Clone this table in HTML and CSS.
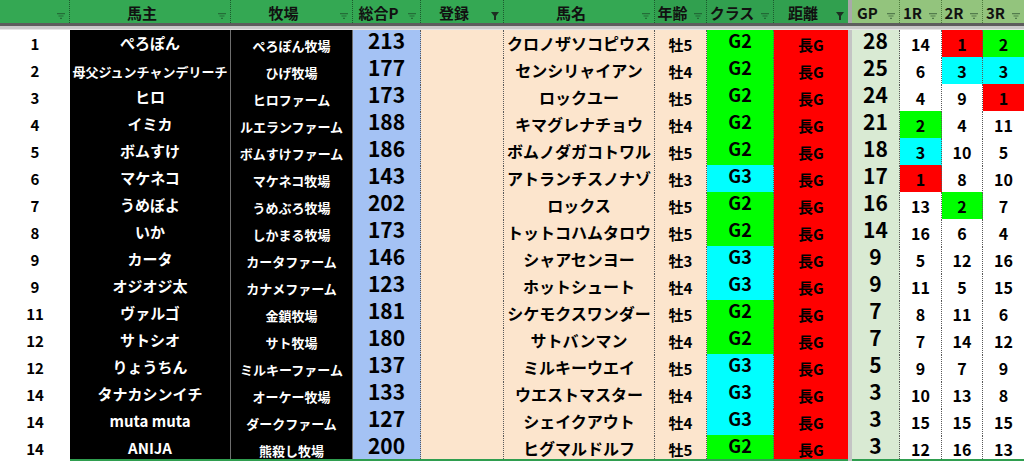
FILE: index.html
```html
<!DOCTYPE html>
<html lang="ja">
<head>
<meta charset="utf-8">
<title>馬主ランキング</title>
<link rel="stylesheet" href="styles.css">
</head>
<body>
<div class="sheet">
  <div class="row head">
    <div class="h"><span class="t"></span><svg class="fi" viewBox="0 0 8 6"><path d="M0 0h8v1.2H0zM1.5 2.4h5v1.2h-5zM3 4.8h2V6H3z"/></svg></div>
    <div class="h"><span class="t">馬主</span><svg class="fi" viewBox="0 0 8 6"><path d="M0 0h8v1.2H0zM1.5 2.4h5v1.2h-5zM3 4.8h2V6H3z"/></svg></div>
    <div class="h"><span class="t">牧場</span><svg class="fi" viewBox="0 0 8 6"><path d="M0 0h8v1.2H0zM1.5 2.4h5v1.2h-5zM3 4.8h2V6H3z"/></svg></div>
    <div class="h"><span class="t">総合P</span><svg class="fi" viewBox="0 0 8 6"><path d="M0 0h8v1.2H0zM1.5 2.4h5v1.2h-5zM3 4.8h2V6H3z"/></svg></div>
    <div class="h"><span class="t">登録</span><svg class="fa" viewBox="0 0 8 8"><path d="M0 0h8L5 4v4H3V4z"/></svg></div>
    <div class="h"><span class="t">馬名</span><svg class="fi" viewBox="0 0 8 6"><path d="M0 0h8v1.2H0zM1.5 2.4h5v1.2h-5zM3 4.8h2V6H3z"/></svg></div>
    <div class="h dk"><span class="t">年齢</span><svg class="fi" viewBox="0 0 8 6"><path d="M0 0h8v1.2H0zM1.5 2.4h5v1.2h-5zM3 4.8h2V6H3z"/></svg></div>
    <div class="h dk"><span class="t">クラス</span><svg class="fi" viewBox="0 0 8 6"><path d="M0 0h8v1.2H0zM1.5 2.4h5v1.2h-5zM3 4.8h2V6H3z"/></svg></div>
    <div class="h dk last"><span class="t">距離</span><svg class="fa" viewBox="0 0 8 8"><path d="M0 0h8L5 4v4H3V4z"/></svg></div>
    <div class="hsep"></div>
    <div class="h lt"><span class="t">GP</span><svg class="fi" viewBox="0 0 8 6"><path d="M0 0h8v1.2H0zM1.5 2.4h5v1.2h-5zM3 4.8h2V6H3z"/></svg></div>
    <div class="h lt"><span class="t">1R</span><svg class="fi" viewBox="0 0 8 6"><path d="M0 0h8v1.2H0zM1.5 2.4h5v1.2h-5zM3 4.8h2V6H3z"/></svg></div>
    <div class="h lt"><span class="t">2R</span><svg class="fi" viewBox="0 0 8 6"><path d="M0 0h8v1.2H0zM1.5 2.4h5v1.2h-5zM3 4.8h2V6H3z"/></svg></div>
    <div class="h lt last"><span class="t">3R</span><svg class="fi" viewBox="0 0 8 6"><path d="M0 0h8v1.2H0zM1.5 2.4h5v1.2h-5zM3 4.8h2V6H3z"/></svg></div>
  </div>
  <div class="freeze"></div>

  <div class="row"><div class="c rank">1</div><div class="c owner">ぺろぽん</div><div class="c farm">ぺろぽん牧場</div><div class="c pts">213</div><div class="c reg"></div><div class="c name">クロノザソコピウス</div><div class="c age">牡5</div><div class="c cls g2">G2</div><div class="c dist">長G</div><div class="c sep"></div><div class="c gp">28</div><div class="c r">14</div><div class="c r red">1</div><div class="c r grn last">2</div></div>
  <div class="row"><div class="c rank">2</div><div class="c owner small">母父ジュンチャンデリーチ</div><div class="c farm">ひげ牧場</div><div class="c pts">177</div><div class="c reg"></div><div class="c name">センシリャイアン</div><div class="c age">牡4</div><div class="c cls g2">G2</div><div class="c dist">長G</div><div class="c sep"></div><div class="c gp">25</div><div class="c r">6</div><div class="c r cyn">3</div><div class="c r cyn last">3</div></div>
  <div class="row"><div class="c rank">3</div><div class="c owner">ヒロ</div><div class="c farm">ヒロファーム</div><div class="c pts">173</div><div class="c reg"></div><div class="c name">ロックユー</div><div class="c age">牡5</div><div class="c cls g2">G2</div><div class="c dist">長G</div><div class="c sep"></div><div class="c gp">24</div><div class="c r">4</div><div class="c r">9</div><div class="c r red last">1</div></div>
  <div class="row"><div class="c rank">4</div><div class="c owner">イミカ</div><div class="c farm">ルエランファーム</div><div class="c pts">188</div><div class="c reg"></div><div class="c name">キマグレナチョウ</div><div class="c age">牡4</div><div class="c cls g2">G2</div><div class="c dist">長G</div><div class="c sep"></div><div class="c gp">21</div><div class="c r grn">2</div><div class="c r">4</div><div class="c r last">11</div></div>
  <div class="row"><div class="c rank">5</div><div class="c owner">ボムすけ</div><div class="c farm">ボムすけファーム</div><div class="c pts">186</div><div class="c reg"></div><div class="c name">ボムノダガコトワル</div><div class="c age">牡5</div><div class="c cls g2">G2</div><div class="c dist">長G</div><div class="c sep"></div><div class="c gp">18</div><div class="c r cyn">3</div><div class="c r">10</div><div class="c r last">5</div></div>
  <div class="row"><div class="c rank">6</div><div class="c owner">マケネコ</div><div class="c farm">マケネコ牧場</div><div class="c pts">143</div><div class="c reg"></div><div class="c name">アトランチスノナゾ</div><div class="c age">牡3</div><div class="c cls g3">G3</div><div class="c dist">長G</div><div class="c sep"></div><div class="c gp">17</div><div class="c r red">1</div><div class="c r">8</div><div class="c r last">10</div></div>
  <div class="row"><div class="c rank">7</div><div class="c owner">うめぼよ</div><div class="c farm">うめぶろ牧場</div><div class="c pts">202</div><div class="c reg"></div><div class="c name">ロックス</div><div class="c age">牡5</div><div class="c cls g2">G2</div><div class="c dist">長G</div><div class="c sep"></div><div class="c gp">16</div><div class="c r">13</div><div class="c r grn">2</div><div class="c r last">7</div></div>
  <div class="row"><div class="c rank">8</div><div class="c owner">いか</div><div class="c farm">しかまる牧場</div><div class="c pts">173</div><div class="c reg"></div><div class="c name">トットコハムタロウ</div><div class="c age">牡5</div><div class="c cls g2">G2</div><div class="c dist">長G</div><div class="c sep"></div><div class="c gp">14</div><div class="c r">16</div><div class="c r">6</div><div class="c r last">4</div></div>
  <div class="row"><div class="c rank">9</div><div class="c owner">カータ</div><div class="c farm">カータファーム</div><div class="c pts">146</div><div class="c reg"></div><div class="c name">シャアセンヨー</div><div class="c age">牡3</div><div class="c cls g3">G3</div><div class="c dist">長G</div><div class="c sep"></div><div class="c gp">9</div><div class="c r">5</div><div class="c r">12</div><div class="c r last">16</div></div>
  <div class="row"><div class="c rank">9</div><div class="c owner">オジオジ太</div><div class="c farm">カナメファーム</div><div class="c pts">123</div><div class="c reg"></div><div class="c name">ホットシュート</div><div class="c age">牡4</div><div class="c cls g3">G3</div><div class="c dist">長G</div><div class="c sep"></div><div class="c gp">9</div><div class="c r">11</div><div class="c r">5</div><div class="c r last">15</div></div>
  <div class="row"><div class="c rank">11</div><div class="c owner">ヴァルゴ</div><div class="c farm">金鎖牧場</div><div class="c pts">181</div><div class="c reg"></div><div class="c name">シケモクスワンダー</div><div class="c age">牡5</div><div class="c cls g2">G2</div><div class="c dist">長G</div><div class="c sep"></div><div class="c gp">7</div><div class="c r">8</div><div class="c r">11</div><div class="c r last">6</div></div>
  <div class="row"><div class="c rank">12</div><div class="c owner">サトシオ</div><div class="c farm">サト牧場</div><div class="c pts">180</div><div class="c reg"></div><div class="c name">サトバンマン</div><div class="c age">牡4</div><div class="c cls g2">G2</div><div class="c dist">長G</div><div class="c sep"></div><div class="c gp">7</div><div class="c r">7</div><div class="c r">14</div><div class="c r last">12</div></div>
  <div class="row"><div class="c rank">12</div><div class="c owner">りょうちん</div><div class="c farm">ミルキーファーム</div><div class="c pts">137</div><div class="c reg"></div><div class="c name">ミルキーウエイ</div><div class="c age">牡5</div><div class="c cls g3">G3</div><div class="c dist">長G</div><div class="c sep"></div><div class="c gp">5</div><div class="c r">9</div><div class="c r">7</div><div class="c r last">9</div></div>
  <div class="row"><div class="c rank">14</div><div class="c owner">タナカシンイチ</div><div class="c farm">オーケー牧場</div><div class="c pts">133</div><div class="c reg"></div><div class="c name">ウエストマスター</div><div class="c age">牡4</div><div class="c cls g3">G3</div><div class="c dist">長G</div><div class="c sep"></div><div class="c gp">3</div><div class="c r">10</div><div class="c r">13</div><div class="c r last">8</div></div>
  <div class="row"><div class="c rank">14</div><div class="c owner">muta muta</div><div class="c farm">ダークファーム</div><div class="c pts">127</div><div class="c reg"></div><div class="c name">シェイクアウト</div><div class="c age">牡4</div><div class="c cls g3">G3</div><div class="c dist">長G</div><div class="c sep"></div><div class="c gp">3</div><div class="c r">15</div><div class="c r">15</div><div class="c r last">15</div></div>
  <div class="row"><div class="c rank">14</div><div class="c owner">ANIJA</div><div class="c farm">熊殺し牧場</div><div class="c pts">200</div><div class="c reg"></div><div class="c name">ヒグマルドルフ</div><div class="c age">牡5</div><div class="c cls g2">G2</div><div class="c dist">長G</div><div class="c sep"></div><div class="c gp">3</div><div class="c r">12</div><div class="c r">16</div><div class="c r last">13</div></div>
</div>
</body>
</html>
```

FILE: styles.css
```css
html, body {
  margin: 0;
  padding: 0;
  background: #ffffff;
}

body {
  font-family: "Noto Sans CJK JP", "Noto Sans", sans-serif;
  font-weight: 700;
  color: #000;
  overflow: hidden;
}

.sheet {
  position: relative;
  width: 1024px;
  height: 461px;
  overflow: hidden;
}

.sheet::after {
  content: "";
  position: absolute;
  left: 70px;
  right: 0;
  bottom: 0;
  height: 2px;
  background: linear-gradient(90deg, #2f9e4f 0 778px, transparent 778px 782px, #2f9e4f 782px);
}

.row {
  display: grid;
  grid-template-columns: 70px 161px 122px 68px 83px 151px 52px 67px 74px 4px 48px 42px 41px 41px;
  height: 27px;
}

/* header */
.head {
  height: 23px;
}

.h {
  display: flex;
  align-items: flex-end;
  background: #34a853;
  border-right: 1px dotted #1c5a2e;
  box-sizing: border-box;
  font-size: 15px;
  line-height: 1;
  padding-bottom: 3px;
  color: #111;
  white-space: nowrap;
  overflow: hidden;
}

.h.dk {
  background: #31a04f;
}

.h.lt {
  background: #93c47d;
  border-right-color: #4d7a3c;
}

.h.last {
  border-right: none;
}

.h .t {
  flex: 1;
  text-align: center;
}

.fi {
  width: 8px;
  height: 6px;
  margin: 0 4px 1px 4px;
  fill: rgba(20, 50, 30, 0.5);
  flex: none;
}

.fa {
  width: 8px;
  height: 8px;
  margin: 0 4px 0 4px;
  fill: #1d2f22;
  flex: none;
}

.hsep {
  background: #a9a9a9;
}

.freeze {
  height: 7px;
  background: linear-gradient(#5d5d5d 0 3px, #c9c9c9 3px 6px, #e6e6e6 6px);
}

/* body cells */
.c {
  display: flex;
  align-items: flex-end;
  justify-content: center;
  box-sizing: border-box;
  border-right: 1px dotted #5a5a5a;
  border-bottom: 1px dotted #5a5a5a;
  padding-bottom: 5px;
  white-space: nowrap;
  line-height: 1;
}

.rank {
  font-size: 15px;
  background: #fff;
  border-right: none;
  border-bottom: 1px solid #e0e0e0;
  padding-bottom: 6px;
}

.owner,
.farm {
  background: #000;
  color: #fff;
  border-right: 1px solid #6e6e6e;
  border-bottom: 1px solid #6e6e6e;
}

.owner {
  font-size: 15px;
  padding-bottom: 7px;
}

.owner.small {
  font-size: 13px;
  padding-bottom: 6px;
}

.farm {
  font-size: 13px;
  padding-bottom: 5px;
}

.pts {
  background: #a4c2f4;
  font-size: 21px;
  padding-bottom: 6px;
}

.reg,
.name,
.age {
  background: #fce5cd;
}

.name {
  font-size: 16px;
  padding-bottom: 6px;
}

.age {
  font-size: 15px;
  padding-bottom: 5px;
}

.cls {
  font-size: 18px;
  padding-bottom: 8px;
}

.g2 {
  background: #00ff00;
}

.g3 {
  background: #00ffff;
}

.dist {
  background: #ff0000;
  font-size: 15px;
  border-right: none;
  padding-bottom: 5px;
}

.sep {
  background: #c4c4c4;
  border: none;
}

.gp {
  background: #d9ead3;
  font-size: 21px;
  padding-bottom: 6px;
}

.r {
  background: #fff;
  font-size: 16px;
  padding-bottom: 5px;
}

.r.last {
  border-right: none;
}

.red {
  background: #ff0000;
}

.grn {
  background: #00ff00;
}

.cyn {
  background: #00ffff;
}
```
